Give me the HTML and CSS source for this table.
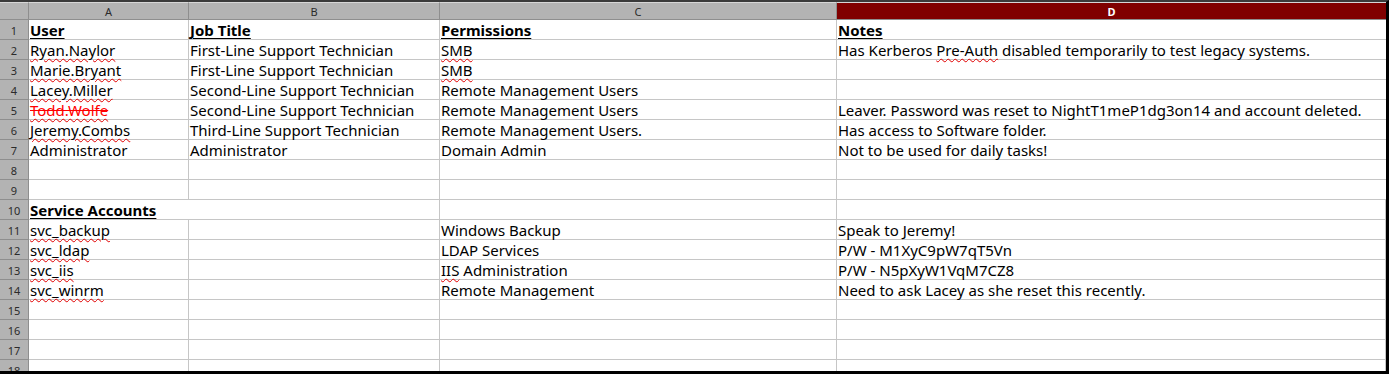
FILE: index.html
```html
<!DOCTYPE html>
<html>
<head>
<meta charset="utf-8">
<link rel="stylesheet" href="styles.css">
</head>
<body>
<div class="sheet">
  <div class="grid">
    <div class="hd corner"></div>
    <div class="hd col">A</div>
    <div class="hd col">B</div>
    <div class="hd col">C</div>
    <div class="hd col sel">D</div>

    <div class="hd rn">1</div>
    <div class="c"><span class="title">User</span></div>
    <div class="c"><span class="title">Job Title</span></div>
    <div class="c"><span class="title">Permissions</span></div>
    <div class="c"><span class="title">Notes</span></div>

    <div class="hd rn">2</div>
    <div class="c"><span class="sp">Ryan.Naylor</span></div>
    <div class="c">First-Line Support Technician</div>
    <div class="c"><span class="sp">SMB</span></div>
    <div class="c">Has Kerberos <span class="sp">Pre-Auth</span> disabled temporarily to test legacy systems.</div>

    <div class="hd rn">3</div>
    <div class="c"><span class="sp">Marie.Bryant</span></div>
    <div class="c">First-Line Support Technician</div>
    <div class="c"><span class="sp">SMB</span></div>
    <div class="c"></div>

    <div class="hd rn">4</div>
    <div class="c"><span class="sp">Lacey.Miller</span></div>
    <div class="c">Second-Line Support Technician</div>
    <div class="c">Remote Management Users</div>
    <div class="c"></div>

    <div class="hd rn">5</div>
    <div class="c"><span class="sp gone"><span class="strike">Todd.Wolfe</span></span></div>
    <div class="c">Second-Line Support Technician</div>
    <div class="c">Remote Management Users</div>
    <div class="c">Leaver. Password was reset to NightT1meP1dg3on14 and account deleted.</div>

    <div class="hd rn">6</div>
    <div class="c"><span class="sp">Jeremy.Combs</span></div>
    <div class="c">Third-Line Support Technician</div>
    <div class="c">Remote Management Users.</div>
    <div class="c">Has access to Software folder.</div>

    <div class="hd rn">7</div>
    <div class="c">Administrator</div>
    <div class="c">Administrator</div>
    <div class="c">Domain Admin</div>
    <div class="c">Not to be used for daily tasks!</div>

    <div class="hd rn">8</div>
    <div class="c"></div><div class="c"></div><div class="c"></div><div class="c"></div>

    <div class="hd rn">9</div>
    <div class="c"></div><div class="c"></div><div class="c"></div><div class="c"></div>

    <div class="hd rn">10</div>
    <div class="c span2"><span class="title">Service Accounts</span></div>
    <div class="c"></div>
    <div class="c"></div>

    <div class="hd rn">11</div>
    <div class="c"><span class="sp">svc_backup</span></div>
    <div class="c"></div>
    <div class="c">Windows Backup</div>
    <div class="c">Speak to Jeremy!</div>

    <div class="hd rn">12</div>
    <div class="c"><span class="sp">svc_ldap</span></div>
    <div class="c"></div>
    <div class="c">LDAP Services</div>
    <div class="c">P/W - M1XyC9pW7qT5Vn</div>

    <div class="hd rn">13</div>
    <div class="c"><span class="sp">svc_iis</span></div>
    <div class="c"></div>
    <div class="c"><span class="sp">IIS</span> Administration</div>
    <div class="c">P/W - N5pXyW1VqM7CZ8</div>

    <div class="hd rn">14</div>
    <div class="c"><span class="sp">svc_winrm</span></div>
    <div class="c"></div>
    <div class="c">Remote Management</div>
    <div class="c">Need to ask Lacey as she reset this recently.</div>

    <div class="hd rn">15</div>
    <div class="c"></div><div class="c"></div><div class="c"></div><div class="c"></div>
    <div class="hd rn">16</div>
    <div class="c"></div><div class="c"></div><div class="c"></div><div class="c"></div>
    <div class="hd rn">17</div>
    <div class="c"></div><div class="c"></div><div class="c"></div><div class="c"></div>
    <div class="hd rn">18</div>
    <div class="c"></div><div class="c"></div><div class="c"></div><div class="c"></div>
  </div>
</div>
</body>
</html>
```

FILE: styles.css
```css
html, body {
  margin: 0;
  padding: 0;
  background: #ffffff;
}
.sheet {
  width: 1389px;
  height: 374px;
  box-sizing: border-box;
  border-top: 2px solid #3a3a3a;
  border-right: 3px solid #000000;
  border-bottom: 3px solid #000000;
  overflow: hidden;
  font-family: "Noto Sans", "Open Sans", sans-serif;
  color: #000000;
}
.grid {
  display: grid;
  grid-template-columns: 29px 160px 251px 397px 549px;
  grid-template-rows: 18px;
  grid-auto-rows: 20px;
}
.hd {
  background: #b3b3b3;
  color: #2b2b2b;
  font-size: 11px;
  display: flex;
  align-items: center;
  justify-content: center;
  box-sizing: border-box;
  border-right: 1px solid #8e8e8e;
  border-bottom: 1px solid #8e8e8e;
}
.col {
  border-top: 1px solid #d6d6d6;
}
.corner {
  border-top: 1px solid #d6d6d6;
}
.col.sel {
  background: #800000;
  color: #ffffff;
  font-weight: bold;
  border-right: none;
}
.rn {
  padding-top: 2px;
}
.c {
  box-sizing: border-box;
  border-right: 1px solid #c6c6c6;
  border-bottom: 1px solid #c6c6c6;
  font-size: 15px;
  line-height: 19px;
  padding-left: 1px;
  padding-top: 1px;
  white-space: nowrap;
  overflow: visible;
}
.c:nth-child(5n) {
  border-right: none;
}
.span2 {
  grid-column: span 2;
}
.title {
  font-weight: bold;
  text-decoration: underline;
  text-decoration-thickness: 1px;
  text-underline-offset: 2px;
}
.sp {
  text-decoration: underline wavy #e00000;
  text-decoration-thickness: 1px;
  text-underline-offset: 2px;
}
.gone {
  color: #ff0000;
}
.strike {
  text-decoration: line-through solid #ff0000;
  text-decoration-thickness: 1px;
}
```
